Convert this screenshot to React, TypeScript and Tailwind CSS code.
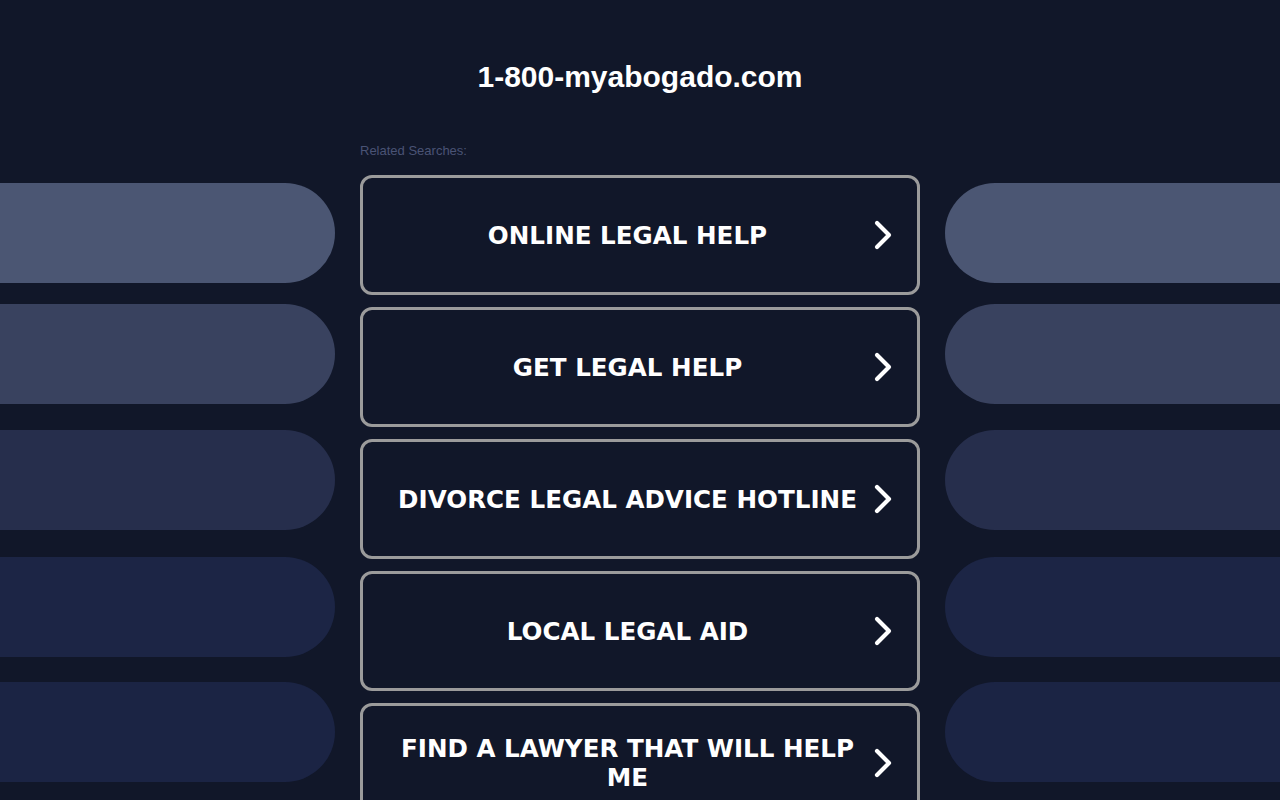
import { ChevronRight } from "lucide-react";

const searches = [
  "ONLINE LEGAL HELP",
  "GET LEGAL HELP",
  "DIVORCE LEGAL ADVICE HOTLINE",
  "LOCAL LEGAL AID",
  "FIND A LAWYER THAT WILL HELP ME",
];

const pills = [
  "mt-[8px] bg-[#4b5673]",
  "mt-[21px] bg-[#39425f]",
  "mt-[26px] bg-[#262e4c]",
  "mt-[27px] bg-[#1c2545]",
  "mt-[25px] bg-[#1b2444]",
];

function SidePills({ side }: { side: "left" | "right" }) {
  return (
    <div className="flex flex-col">
      {pills.map((cls, i) => (
        <div
          key={i}
          className={`h-[100px] w-full ${cls} ${side === "left" ? "rounded-r-[50px]" : "rounded-l-[50px]"}`}
        />
      ))}
    </div>
  );
}

export default function App() {
  return (
    <div className="min-h-screen h-[800px] overflow-hidden bg-[#111729] font-['Liberation_Sans',Arial,sans-serif]">
      <header className="pt-[58px] pb-[47px] text-center">
        <h1 className="text-[30px] leading-[38px] font-bold text-white">1-800-myabogado.com</h1>
      </header>

      <div className="grid grid-cols-[1fr_560px_1fr] gap-x-[25px]">
        <div />
        <div className="text-[13px] leading-[16px] text-[#4a5375] mb-[16px]">Related Searches:</div>
        <div />

        <SidePills side="left" />

        <div className="flex flex-col gap-[12px]">
          {searches.map((s) => (
            <a
              key={s}
              href="#"
              className="relative flex h-[120px] items-center justify-center rounded-[12px] border-[3px] border-[#9b9b9b] bg-[#111729] pl-[30px] pr-[55px]"
            >
              <span className="text-center text-[24.6px] leading-[29px] font-bold text-white font-['DejaVu_Sans',Verdana,sans-serif]">
                {s}
              </span>
              <ChevronRight
                className="absolute right-[10px] top-1/2 -translate-y-1/2 text-white"
                size={48}
                strokeWidth={2.1}
              />
            </a>
          ))}
        </div>

        <SidePills side="right" />
      </div>
    </div>
  );
}
